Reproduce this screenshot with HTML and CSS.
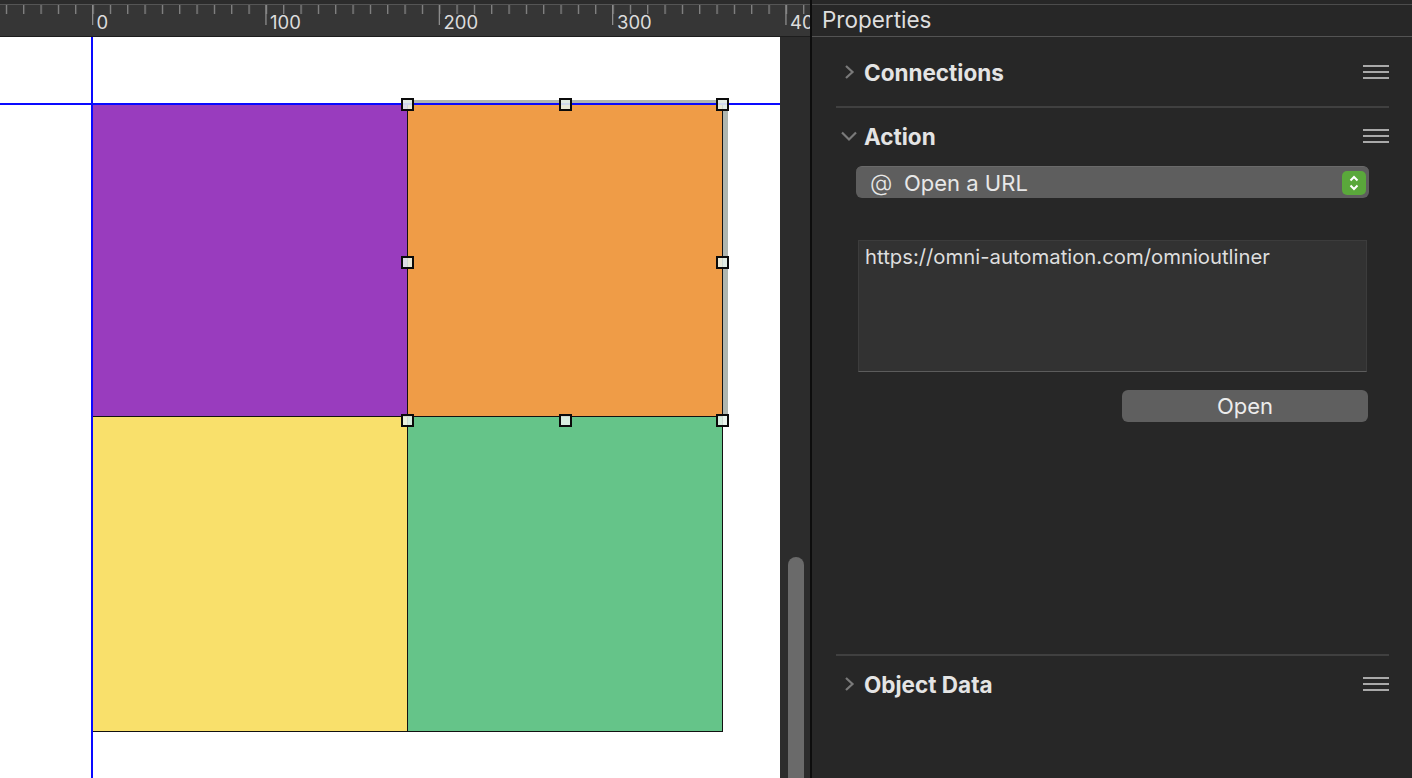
FILE: index.html
```html
<!DOCTYPE html>
<html>
<head>
<meta charset="utf-8">
<link rel="stylesheet" href="styles.css">
</head>
<body>
<div class="app">
  <div class="workspace">
    <div class="ruler-wrap">
      <div class="ruler">
        <svg class="ruler-svg" width="810" height="31" viewBox="0 0 810 31">
          <defs>
            <pattern id="minor" x="5.83" y="0" width="17.333" height="31" patternUnits="userSpaceOnUse">
              <rect x="0" y="0" width="1.2" height="9" fill="#8c8c8c"/>
            </pattern>
          </defs>
          <rect x="0" y="0" width="810" height="31" fill="url(#minor)"/>
          <rect x="92" y="0" width="1.3" height="20" fill="#8c8c8c"/>
          <rect x="265.3" y="0" width="1.3" height="20" fill="#8c8c8c"/>
          <rect x="438.7" y="0" width="1.3" height="20" fill="#8c8c8c"/>
          <rect x="612" y="0" width="1.3" height="20" fill="#8c8c8c"/>
          <rect x="785.3" y="0" width="1.3" height="20" fill="#8c8c8c"/>
          <text class="ruler-label" x="96.5" y="24">0</text>
          <text class="ruler-label" x="270" y="24">100</text>
          <text class="ruler-label" x="443.5" y="24">200</text>
          <text class="ruler-label" x="617" y="24">300</text>
          <text class="ruler-label" x="790" y="24">400</text>
        </svg>
      </div>
    </div>
    <div class="canvas-row">
      <div class="canvas">
        <div class="shape-shadow"></div>
        <div class="shape purple"></div>
        <div class="shape orange"></div>
        <div class="shape yellow"></div>
        <div class="shape green"></div>
        <div class="guide guide-v"></div>
        <div class="guide guide-h"></div>
        <div class="handle h1"></div>
        <div class="handle h2"></div>
        <div class="handle h3"></div>
        <div class="handle h4"></div>
        <div class="handle h5"></div>
        <div class="handle h6"></div>
        <div class="handle h7"></div>
        <div class="handle h8"></div>
      </div>
      <div class="vscroll"><div class="thumb"></div></div>
    </div>
  </div>
  <div class="divider"></div>
  <div class="panel">
    <div class="panel-top"></div>
    <div class="panel-title">Properties</div>
    <div class="sections">
      <div class="section first">
        <div class="sec-head">
          <span class="chev"><svg width="12" height="16" viewBox="0 0 12 16"><path d="M2 2 L8.5 8 L2 14" fill="none" stroke="#7a7a7a" stroke-width="2.2"/></svg></span>
          <span class="sec-title">Connections</span>
          <span class="menu"><i></i><i></i><i></i></span>
        </div>
      </div>
      <div class="sep"></div>
      <div class="section action">
        <div class="sec-head">
          <span class="chev down"><svg width="18" height="12" viewBox="0 0 18 12"><path d="M2 2.5 L9 9.5 L16 2.5" fill="none" stroke="#7a7a7a" stroke-width="2.2"/></svg></span>
          <span class="sec-title">Action</span>
          <span class="menu"><i></i><i></i><i></i></span>
        </div>
        <div class="popup">
          <span class="at">@</span>
          <span class="popup-label">Open a URL</span>
          <span class="stepper"><svg width="24" height="24" viewBox="0 0 24 24"><path d="M8.5 9.5 L12 6 L15.5 9.5 M8.5 14.5 L12 18 L15.5 14.5" fill="none" stroke="#ffffff" stroke-width="2"/></svg></span>
        </div>
        <div class="url-box">https://omni-automation.com/omnioutliner</div>
        <div class="btn-row"><button class="btn">Open</button></div>
      </div>
      <div class="sep"></div>
      <div class="section">
        <div class="sec-head">
          <span class="chev"><svg width="12" height="16" viewBox="0 0 12 16"><path d="M2 2 L8.5 8 L2 14" fill="none" stroke="#7a7a7a" stroke-width="2.2"/></svg></span>
          <span class="sec-title">Object Data</span>
          <span class="menu"><i></i><i></i><i></i></span>
        </div>
      </div>
    </div>
  </div>
</div>
</body>
</html>
```
FILE: styles.css
```css
* { box-sizing: border-box; }
html, body { margin: 0; padding: 0; }
body {
  width: 1412px;
  height: 778px;
  overflow: hidden;
  background: #272727;
  font-family: "Inter", "Noto Sans", "Liberation Sans", sans-serif;
}
.app { display: flex; width: 1412px; height: 778px; overflow: hidden; }

.workspace { width: 810px; display: flex; flex-direction: column; }
.ruler-wrap { background: #2c2c2c; padding-top: 4px; }
.ruler {
  height: 33px;
  background: #363636;
  border-top: 1px solid #555555;
  border-bottom: 1px solid #1d1d1d;
}
.ruler-svg { display: block; }
.ruler-label {
  font-family: "Inter", "Liberation Sans", sans-serif;
  font-size: 18.5px;
  fill: #dcdcdc;
}

.canvas-row { flex: 1; display: flex; min-height: 0; }
.canvas {
  width: 780px;
  background: #ffffff;
  position: relative;
  overflow: hidden;
}
.vscroll {
  width: 30px;
  background: #2c2c2c;
  padding-top: 520px;
  padding-left: 8px;
}
.thumb {
  width: 16px;
  height: 221px;
  background: #6a6a6a;
  border-radius: 8px 8px 0 0;
}
.divider { width: 2px; background: #0d0d0d; }

.shape { position: absolute; border: 1px solid #111; }
.shape-shadow {
  position: absolute;
  left: 403px; top: 63px; width: 325px; height: 316px;
  background: rgba(95, 110, 95, 0.5);
}
.purple { left: 92px; top: 67px; width: 316px; height: 313px; background: #993cbe; }
.orange { left: 407px; top: 67px; width: 316px; height: 313px; background: #ef9c47; }
.yellow { left: 92px; top: 379px; width: 316px; height: 316px; background: #f9e06b; }
.green  { left: 407px; top: 379px; width: 316px; height: 316px; background: #65c489; }

.guide { position: absolute; background: #0a0aff; }
.guide-v { left: 91px; top: 0; width: 2px; height: 741px; }
.guide-h { left: 0; top: 66px; width: 780px; height: 2px; }

.handle {
  position: absolute;
  width: 13px; height: 13px;
  border: 2px solid #0b0b0b;
  background: rgba(232, 244, 236, 0.88);
}
.h1 { left: 401px; top: 61px; }
.h2 { left: 559px; top: 61px; }
.h3 { left: 716px; top: 61px; }
.h4 { left: 401px; top: 219px; }
.h5 { left: 716px; top: 219px; }
.h6 { left: 401px; top: 377px; }
.h7 { left: 559px; top: 377px; }
.h8 { left: 716px; top: 377px; }

.panel { width: 600px; background: #272727; display: flex; flex-direction: column; color: #e2e2e2; }
.panel-top { height: 5px; border-bottom: 1px solid #4c4c4c; }
.panel-title {
  height: 32px;
  border-bottom: 1px solid #535353;
  padding-left: 10px;
  font-size: 22.5px;
  line-height: 30px;
  color: #dedede;
}
.sections { padding: 0 23px 0 24px; }
.section.first { padding: 7px 0 6px; }
.sec-head {
  height: 56px;
  display: flex;
  align-items: center;
}
.chev { width: 28px; display: flex; align-items: center; padding-left: 8px; }
.chev.down { padding-left: 4px; }
.sec-title { font-size: 22.5px; font-weight: 700; color: #e4e4e4; flex: 1; }
.menu { width: 26px; display: flex; flex-direction: column; gap: 4px; }
.menu i { display: block; height: 2px; background: #a9a9a9; }
.sep { height: 2px; background: #404040; }

.action { padding-bottom: 232px; }
.popup {
  margin: 2px 20px 0 20px;
  height: 32px;
  background: #5e5e5e;
  border-radius: 6px;
  border-top: 1px solid #6a6a6a;
  display: flex;
  align-items: center;
  padding: 0 3px 0 14px;
  font-size: 22px;
  color: #e8e8e8;
}
.at { width: 34px; font-weight: 300; font-size: 23px; }
.popup-label { flex: 1; }
.stepper {
  width: 24px; height: 24px;
  background: #5aa83b;
  border-radius: 5px;
  display: flex;
}
.url-box {
  margin: 42px 22px 0 22px;
  height: 132px;
  background: #323232;
  border: 1px solid #3c3c3c;
  border-bottom-color: #5c5c5c;
  padding: 3px 6px;
  font-size: 20.3px;
  color: #dedede;
}
.btn-row { display: flex; justify-content: flex-end; margin: 18px 21px 0 0; }
.btn {
  width: 246px;
  height: 32px;
  background: #5f5f5f;
  border: none;
  border-radius: 6px;
  font-family: inherit;
  font-size: 22px;
  color: #ececec;
  padding: 0;
}
```
